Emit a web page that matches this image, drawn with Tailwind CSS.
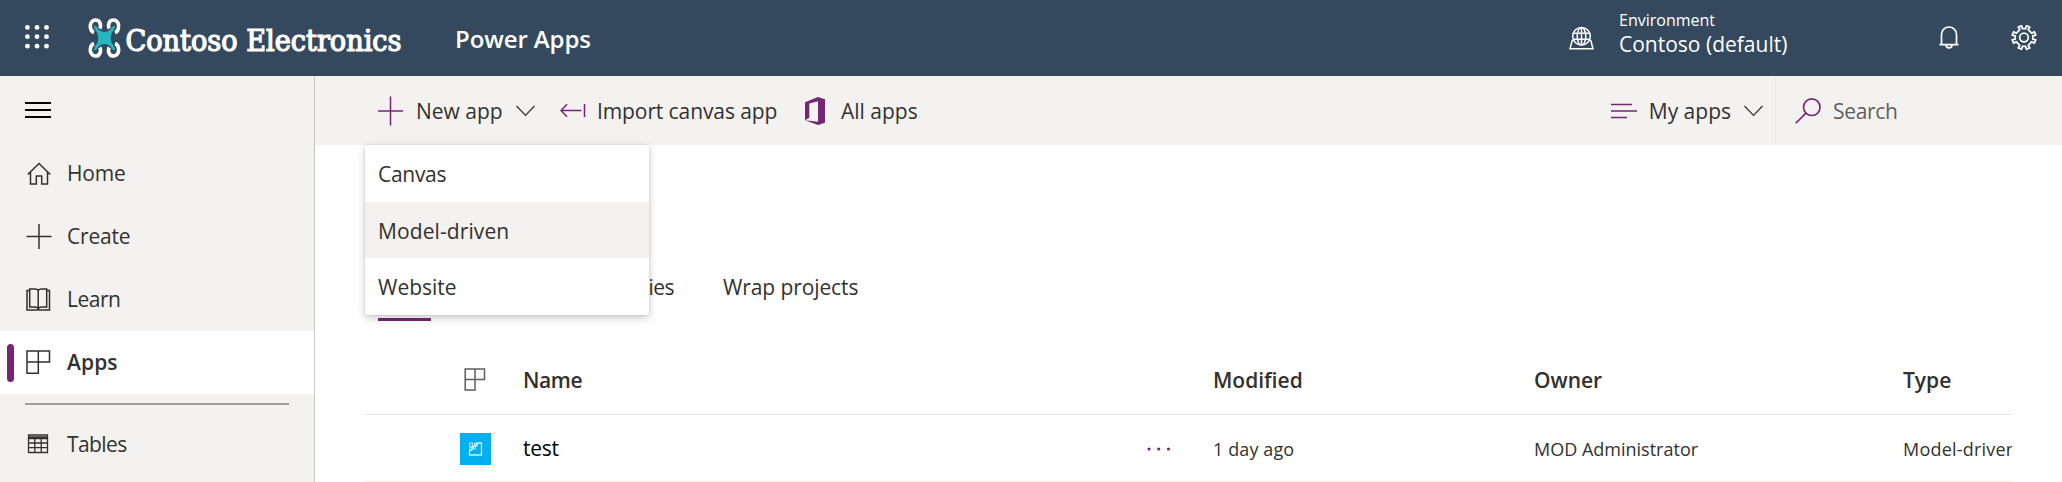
<!DOCTYPE html>
<html lang="en">
<head>
<meta charset="utf-8">
<title>Power Apps</title>
<script src="https://cdn.jsdelivr.net/npm/@tailwindcss/browser@4"></script>
</head>
<body class="flex h-[482px] w-[2062px] flex-col overflow-hidden bg-white font-['Open_Sans','Noto_Sans',sans-serif] text-[21px] whitespace-nowrap text-[#323130]">

<header class="flex h-[76px] shrink-0 items-center bg-[#34495e] text-white">
  <svg class="ml-6 h-[26px] w-[26px]" viewBox="0 0 26 26" fill="currentColor">
    <circle cx="3.4" cy="2.4" r="2.4"/><circle cx="13" cy="2.4" r="2.4"/><circle cx="22.5" cy="2.4" r="2.4"/>
    <circle cx="3.4" cy="11.700" r="2.4"/><circle cx="13" cy="11.700" r="2.4"/><circle cx="22.5" cy="11.700" r="2.4"/>
    <circle cx="3.4" cy="21.200" r="2.4"/><circle cx="13" cy="21.200" r="2.4"/><circle cx="22.5" cy="21.200" r="2.4"/>
  </svg>
  <svg class="ml-[38px] h-[40px] w-[318px]" viewBox="0 0 318 40">
    <g fill="none" stroke="#fff" stroke-width="3.6">
      <path d="M6 14.500C2.500 13.500 1.500 8 3 5C5 1 10.500 1 12 5C12.800 7 12.300 9.500 11.700 10.500"/>
      <path d="M27 14.500C30.500 13.500 31.500 8 30 5C28 1 22.500 1 21 5C20.200 7 20.700 9.500 21.300 10.500"/>
      <path d="M6 25.500C2.500 26.500 1.500 32 3 35C5 39 10.500 39 12 35C12.800 33 12.300 30.500 11.700 29.500"/>
      <path d="M27 25.500C30.500 26.500 31.500 32 30 35C28 39 22.500 39 21 35C20.200 33 20.700 30.500 21.300 29.500"/>
    </g>
    <path fill="#25b7bd" d="M6.300 7.800Q8 7.500 11 12Q16.500 16 22 12Q25 7.500 26.700 7.800Q28 9 24 14.500Q21.500 20 24 25.500Q28 31 26.700 32.200Q25 32.500 22 28Q16.500 24 11 28Q8 32.500 6.300 32.200Q5 31 9 25.500Q11.500 20 9 14.500Q5 9 6.300 7.800Z"/>
    <text x="37.500" y="32.500" textLength="276" lengthAdjust="spacingAndGlyphs" fill="#fff" stroke="#fff" stroke-width="1.200" font-family="DejaVu Serif Condensed, DejaVu Serif, serif" font-size="30">Contoso Electronics</text>
  </svg>
  <span class="ml-[49px] pt-px text-[24px] font-semibold tracking-[-0.1px]">Power Apps</span>
  <div class="ml-auto flex items-center">
    <svg class="h-[24px] w-[26px]" viewBox="0 0 26 24" fill="none" stroke="currentColor" stroke-width="1.500">
      <circle cx="12.500" cy="10.300" r="8.800"/><ellipse cx="12.500" cy="10.300" rx="4.300" ry="8.800"/>
      <path d="M12.500 1.500V19M4.500 7.300H20.500M4.500 13.300H20.500M4.100 14.500H3.200L1 22.700H24L21.800 14.500H20.900"/>
    </svg>
    <div class="ml-[24px] flex w-[320px] flex-col pb-[12px]">
      <span class="text-[16px] leading-[24px]">Environment</span>
      <span class="text-[21px] leading-[24px]">Contoso (default)</span>
    </div>
    <svg class="h-[24px] w-[20px]" viewBox="0 0 20 24" fill="none" stroke="currentColor" stroke-width="1.700">
      <path d="M2.500 18.500V8.500a7.500 7.500 0 0 1 15 0V18.500M.5 18.700H19.500M7 19a3 2.800 0 0 0 6 0"/>
    </svg>
    <svg class="mr-[25px] ml-[52px] h-[26px] w-[26px]" viewBox="0 0 26 26" fill="none" stroke="currentColor" stroke-width="1.700" stroke-linejoin="round">
      <circle cx="13" cy="12.500" r="4.300"/>
      <path transform="translate(0 -.5)" d="M11.300 4.200L10.600 1.200L7.200 2.600L8.800 5.200L5.200 8.800L2.600 7.200L1.200 10.600L4.200 11.300V14.700L1.200 15.400L2.600 18.800L5.200 17.200L8.800 20.800L7.200 23.400L10.600 24.800L11.300 21.800H14.700L15.400 24.800L18.800 23.400L17.200 20.800L20.800 17.200L23.400 18.800L24.800 15.400L21.800 14.700V11.300L24.800 10.600L23.400 7.200L20.800 8.800L17.200 5.200L18.800 2.600L15.400 1.200L14.700 4.200Z"/>
    </svg>
  </div>
</header>

<div class="flex min-h-0 flex-1">
  <nav class="flex w-[315px] shrink-0 flex-col border-r border-[#c8c6c4] bg-[#f3f2f1]">
    <div class="flex h-[66px] shrink-0 items-center pt-[2px] pl-[25px]">
      <svg class="h-4 w-[26px]" viewBox="0 0 26 16" fill="#000"><path d="M0 0H26V2H0ZM0 7H26V9H0ZM0 14H26V16H0Z"/></svg>
    </div>
    <a class="flex h-[63px] shrink-0 items-center pl-[26px]">
      <svg class="mr-[15px] h-[26px] w-[26px]" viewBox="0 0 26 26" fill="none" stroke="currentColor" stroke-width="1.500"><path d="M1.700 13.500L13 2.500L24.300 13.500M4.500 11V23H10.300V15H15.700V23H21.500V11"/></svg>
      <span class="tracking-[-0.2px]">Home</span>
    </a>
    <a class="flex h-[63px] shrink-0 items-center pl-[26px]">
      <svg class="mr-[15px] h-[26px] w-[26px]" viewBox="0 0 26 26" fill="none" stroke="currentColor" stroke-width="1.500"><path d="M.5 12.500H25.500M13 0V25"/></svg>
      <span class="tracking-[-0.2px]">Create</span>
    </a>
    <a class="flex h-[63px] shrink-0 items-center pl-[26px]">
      <svg class="mr-[15px] h-[26px] w-[26px]" viewBox="0 0 26 26" fill="none" stroke="currentColor" stroke-width="1.500"><path d="M3.700 3.500H1V23H23.500V3.500H20.700M3.700 2H9Q12 2 12.200 4Q12.500 2 15.500 2H20.700V20H15.500Q12.500 20 12.200 22.300Q12 20 9 20H3.700ZM12.200 4V22.500"/></svg>
      <span class="tracking-[-0.5px]">Learn</span>
    </a>
    <a class="flex h-[63px] shrink-0 items-center bg-white pl-[7px]">
      <span class="h-[38px] w-[7px] rounded-full bg-[#742774]"></span>
      <svg class="mr-[15px] ml-[12px] h-[26px] w-[26px]" viewBox="0 0 26 26" fill="none" stroke="currentColor" stroke-width="1.500"><path d="M1 1H23.500V12H1ZM12.300 1V23.300H1V12"/></svg>
      <span class="font-semibold tracking-[0.1px]">Apps</span>
    </a>
    <div class="mt-[9px] ml-[25px] h-[2px] w-[264px] shrink-0 bg-[#a19f9d]"></div>
    <a class="flex h-[77px] shrink-0 items-center pt-[3px] pl-[26px]">
      <svg class="mr-[15px] h-[26px] w-[26px]" viewBox="0 0 26 26" fill="none" stroke="currentColor" stroke-width="1.300"><path d="M2.500 3H21.500V20.500H2.500ZM2.500 5H21.500M2.500 6.500H21.500M2.500 11H21.500M2.500 15.700H21.500M8.800 6V20.500M15.200 6V20.500"/></svg>
      <span class="tracking-[-0.6px]">Tables</span>
    </a>
  </nav>

  <main class="flex min-w-0 flex-1 flex-col">
    <div class="relative flex h-[69px] shrink-0 items-center bg-[#f3f2f1] pl-[63px]">
      <svg class="mr-[13px] h-[30px] w-[25px]" viewBox="0 0 25 30" fill="none" stroke="#742774" stroke-width="1.500"><path d="M0 15H25M12.500 .5V29.500"/></svg>
      <span class="w-[100px] pt-[2px]">New app</span>
      <svg class="h-[12px] w-[19px]" viewBox="0 0 19 12" fill="none" stroke="currentColor" stroke-width="1.200"><path d="M.5 1L9.500 10.500L18.500 1"/></svg>
      <svg class="mr-[11px] ml-[25px] h-[14px] w-[26px]" viewBox="0 0 26 14" fill="none" stroke="#742774" stroke-width="1.500"><path d="M1 6.500H21.500M7 .2L1 6.500L7 12.800M24.500 0V13"/></svg>
      <span class="w-[207px] pt-[2px] tracking-[-0.1px]">Import canvas app</span>
      <svg class="h-[30px] w-[22px]" viewBox="0 0 22 30"><path fill="#742774" fill-rule="evenodd" d="M14 1L21 3.200V26.800L14 29L1 24.300L14 25.700V5.200L5.300 7.400V21.700L1 24.300V6.200Z"/></svg>
      <span class="ml-[15px] pt-[2px]">All apps</span>

      <div class="ml-auto flex h-full items-center">
        <svg class="h-4 w-[26px]" viewBox="0 0 26 16" fill="none" stroke="#742774" stroke-width="1.700"><path d="M0 1.500H21M0 8H26M0 14.500H16"/></svg>
        <span class="ml-[12px] pt-[2px]">My apps</span>
        <svg class="ml-[13px] h-[12px] w-[19px]" viewBox="0 0 19 12" fill="none" stroke="currentColor" stroke-width="1.200"><path d="M.5 1L9.500 10.500L18.500 1"/></svg>
        <div class="ml-[12px] flex h-full w-[287px] items-center border-l border-[#e9e8e7] pl-[19px]">
          <svg class="h-[26px] w-[26px]" viewBox="0 0 26 26" fill="none" stroke="#742774" stroke-width="1.600"><circle cx="16.800" cy="9.200" r="8.300"/><path d="M10.900 15.100L.7 25.300"/></svg>
          <span class="ml-[12px] pt-[2px] tracking-[-0.3px] text-[#605e5c]">Search</span>
        </div>
      </div>

      <div class="absolute top-[69px] left-[50px] z-10 flex w-[284px] flex-col rounded-[2px] bg-white shadow-[0_3px_9px_rgba(0,0,0,0.2),0_0_3px_rgba(0,0,0,0.12)]">
        <div class="flex h-[57px] items-center pt-[2px] pl-[13px] tracking-[-0.3px]">Canvas</div>
        <div class="flex h-[56px] items-center bg-[#f3f2f1] pt-[3px] pl-[13px] tracking-[0.1px]">Model-driven</div>
        <div class="flex h-[57px] items-center pt-[2px] pl-[13px]">Website</div>
      </div>
    </div>

    <div class="mt-[109px] ml-[63px] flex h-[67px] shrink-0">
      <div class="flex w-[53px] items-center justify-center border-b-[3px] border-[#742774]"><span class="font-semibold">Apps</span></div>
      <div class="flex w-[243px] items-center justify-end tracking-[-0.5px]">Component libraries</div>
      <div class="ml-[49px] flex items-center tracking-[-0.1px]">Wrap projects</div>
    </div>

    <section class="ml-[50px] w-[1647px] overflow-hidden">
      <div class="flex h-[94px] items-center border-b border-[#e6e5e4] pt-[25px] font-semibold">
        <svg class="mr-[37px] ml-[99px] h-[24px] w-[22px]" viewBox="0 0 22 24" fill="none" stroke="#605e5c" stroke-width="1.500"><path d="M1.200 1H20.500V11.500H1.200ZM11 1V22H1.200V11.500"/></svg>
        <span class="w-[690px] pt-[2px] tracking-[-0.4px]">Name</span>
        <span class="w-[321px] pt-[2px]">Modified</span>
        <span class="w-[369px] pt-[2px]">Owner</span>
        <span class="pt-[2px]">Type</span>
      </div>
      <div class="flex h-[67px] items-center border-b border-[#edebe9] pt-[2px]">
        <svg class="ml-[95px] h-[32px] w-[31px]" viewBox="0 0 31 32" fill="none" stroke="#d5f2fd"><path fill="#00b0f0" stroke="none" d="M0 0H31V32H0Z"/><path stroke-width="1.300" d="M17.500 10H21.500V22H9.500V18.500L17.500 10"/><path stroke-width=".9" d="M9.500 10H12.500V13H9.500ZM12.500 13H15.500V16H12.500ZM9.500 14.500H12V17.500H9.500ZM14.500 10H17.500V13H14.500Z"/></svg>
        <span class="ml-[32px] w-[624px] tracking-[-0.3px] text-black">test</span>
        <svg class="mr-[42px] h-[4px] w-[24px]" viewBox="0 0 24 4" fill="#742774"><circle cx="2" cy="2" r="1.600"/><circle cx="11.700" cy="2" r="1.600"/><circle cx="21.500" cy="2" r="1.600"/></svg>
        <span class="w-[321px] pt-px text-[18px] tracking-[0.1px]">1 day ago</span>
        <span class="w-[369px] pt-px text-[18px]">MOD Administrator</span>
        <span class="w-[109px] shrink-0 overflow-hidden pt-px text-[18px] tracking-[0.2px]">Model-driven</span>
      </div>
    </section>
  </main>
</div>
</body>
</html>
